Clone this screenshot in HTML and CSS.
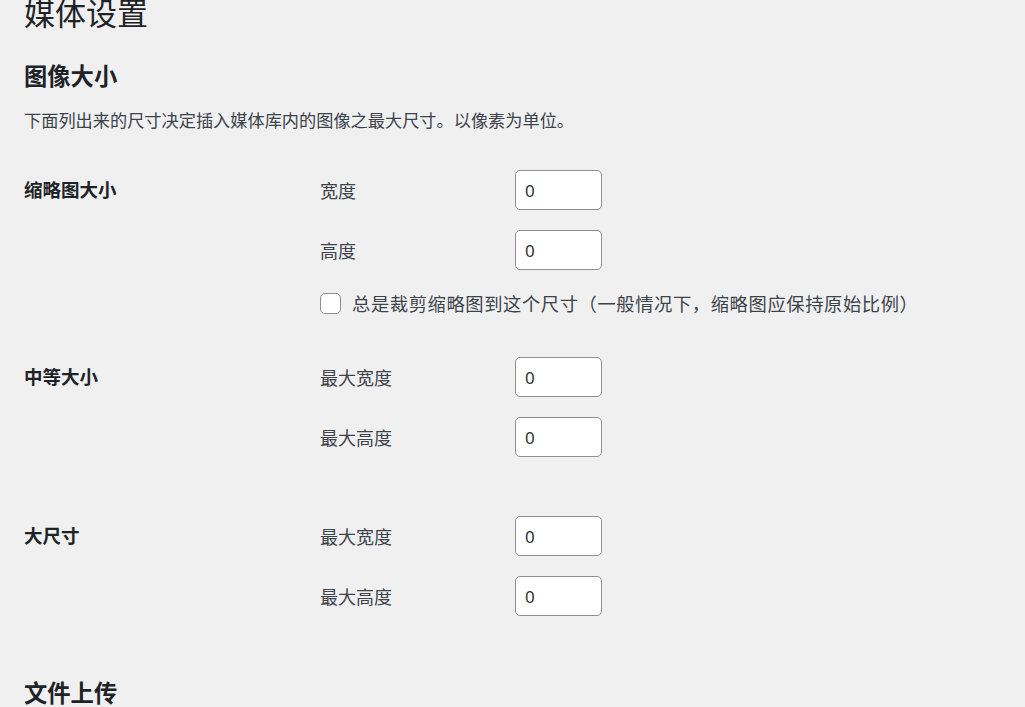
FILE: index.html
```html
<!DOCTYPE html>
<html lang="zh-CN">
<head>
<meta charset="utf-8">
<title>媒体设置</title>
<link rel="stylesheet" href="styles.css">
</head>
<body>
<div class="wrap">
  <h1 class="page-title">媒体设置</h1>
  <h2 class="section-title">图像大小</h2>
  <p class="desc">下面列出来的尺寸决定插入媒体库内的图像之最大尺寸。以像素为单位。</p>

  <div class="form-row row-thumb">
    <div class="row-label">缩略图大小</div>
    <div class="row-fields">
      <div class="field"><label class="field-label">宽度</label><input class="num" type="text" value="0"></div>
      <div class="field"><label class="field-label">高度</label><input class="num" type="text" value="0"></div>
      <div class="check-row"><span class="checkbox"></span><span class="check-text">总是裁剪缩略图到这个尺寸（一般情况下，缩略图应保持原始比例）</span></div>
    </div>
  </div>

  <div class="form-row row-medium">
    <div class="row-label">中等大小</div>
    <div class="row-fields">
      <div class="field"><label class="field-label">最大宽度</label><input class="num" type="text" value="0"></div>
      <div class="field"><label class="field-label">最大高度</label><input class="num" type="text" value="0"></div>
    </div>
  </div>

  <div class="form-row row-large">
    <div class="row-label">大尺寸</div>
    <div class="row-fields">
      <div class="field"><label class="field-label">最大宽度</label><input class="num" type="text" value="0"></div>
      <div class="field"><label class="field-label">最大高度</label><input class="num" type="text" value="0"></div>
    </div>
  </div>

  <h2 class="section-title upload-title">文件上传</h2>
</div>
</body>
</html>
```

FILE: styles.css
```css
html, body {
  margin: 0;
  padding: 0;
  background: #f0f0f1;
  height: 100%;
  overflow: hidden;
}
body {
  font-family: "Noto Sans", "Noto Sans CJK SC", sans-serif;
  color: #3c434a;
}
.wrap {
  padding-left: 24px;
}
.page-title {
  margin: -6px 0 0 0;
  font-size: 31px;
  line-height: 39px;
  font-weight: 400;
  color: #1d2327;
}
.section-title {
  margin: 28px 0 0 0;
  font-size: 23.3px;
  line-height: 30px;
  font-weight: 700;
  color: #1d2327;
}
.desc {
  margin: 18px 0 0 0;
  font-size: 17.2px;
  line-height: 24px;
  color: #3c434a;
}
.form-row {
  display: flex;
  align-items: flex-start;
}
.row-thumb { margin-top: 37px; }
.row-medium { margin-top: 43px; }
.row-large { margin-top: 59px; }
.row-label {
  width: 296px;
  flex: none;
  font-size: 18.5px;
  line-height: 40px;
  font-weight: 700;
  color: #1d2327;
}
.row-fields {
  display: flex;
  flex-direction: column;
  gap: 20px;
}
.field {
  display: flex;
  align-items: center;
  height: 40px;
}
.field-label {
  width: 195px;
  flex: none;
  font-size: 18px;
  color: #3c434a;
}
.num {
  box-sizing: border-box;
  width: 87px;
  height: 40px;
  margin: 0;
  padding: 0 9px;
  border: 1px solid #8c8f94;
  border-radius: 5px;
  background: #fff;
  font-family: "Noto Sans", sans-serif;
  font-size: 17px;
  color: #2c3338;
  outline: none;
}
.check-row {
  display: flex;
  align-items: center;
  height: 21px;
  margin-top: 3px;
}
.checkbox {
  box-sizing: border-box;
  width: 21px;
  height: 21px;
  border: 1px solid #8c8f94;
  border-radius: 5px;
  background: #fff;
  flex: none;
}
.check-text {
  margin-left: 11px;
  font-size: 18.3px;
  line-height: 24px;
  letter-spacing: 0.6px;
  color: #3c434a;
  white-space: nowrap;
}
.upload-title {
  margin-top: 62px;
}
```
